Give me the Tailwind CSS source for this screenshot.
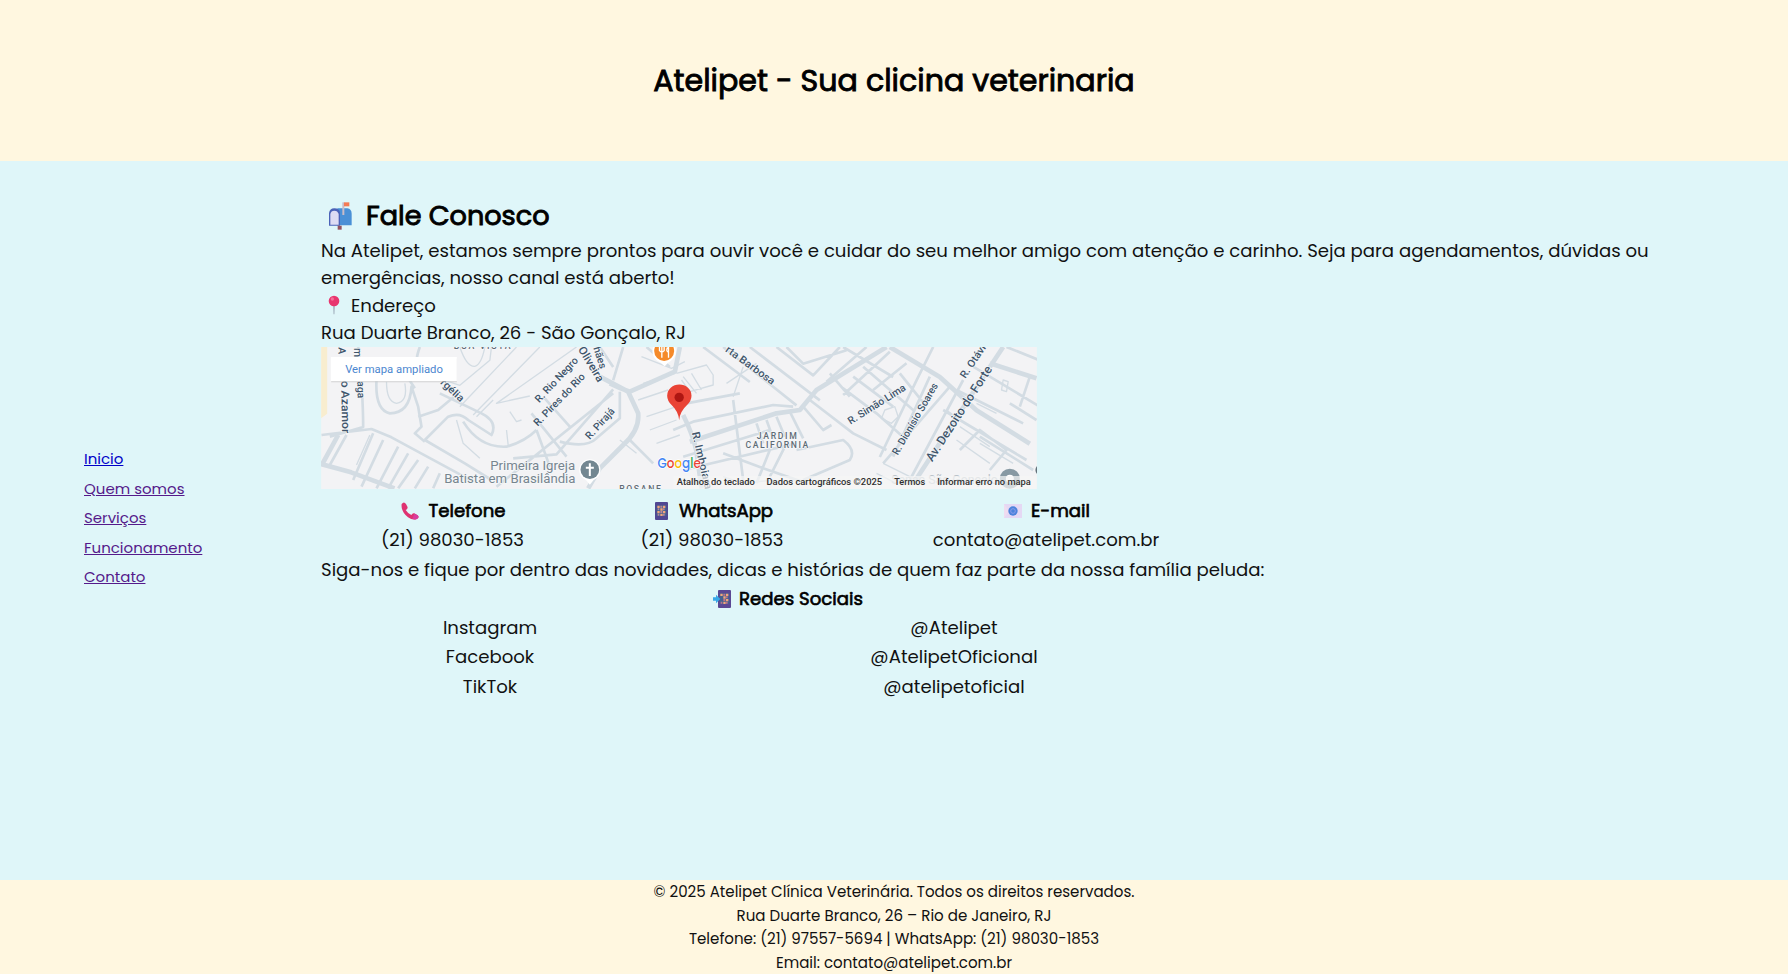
<!DOCTYPE html>
<html lang="pt-BR">
<head>
<meta charset="utf-8">
<title>Atelipet - Fale Conosco</title>
<script src="https://cdn.jsdelivr.net/npm/@tailwindcss/browser@4"></script>
</head>
<body class="w-[1788px] h-[974px] overflow-hidden flex flex-col bg-[#dff6f9] text-[#111] font-[Poppins,Inter,sans-serif] whitespace-nowrap">
<header class="h-[161px] shrink-0 bg-[#fff7e0] flex items-center justify-center">
<h1 class="text-[30.1px] text-black [-webkit-text-stroke:0.9px_black]">Atelipet - Sua clicina veterinaria</h1>
</header>
<main class="h-[719.4px] shrink-0 flex">
<nav class="w-[321px] shrink-0 pl-[84px] pt-[283px] text-[15px] leading-[29.5px] text-[#551a8b] flex flex-col items-start">
<a class="underline text-[#0000c8]">Inicio</a>
<a class="underline">Quem somos</a>
<a class="underline">Serviços</a>
<a class="underline">Funcionamento</a>
<a class="underline">Contato</a>
</nav>
<section class="pt-[34px] text-[18.12px]">
<h2 class="h-[42px] leading-[42px] text-[27.1px] text-black flex items-center [-webkit-text-stroke:0.9px_black]">
<svg class="w-[26px] h-[30px] ml-[7px] mr-[12px]" viewBox="0 0 78 90"><path d="M28 22h30q13 2 13 16v35H28z" fill="#4a90d6"/><path d="M3 74V36q2-14 16-14 16 0 17 14v38z" fill="#4b62b8"/><path d="M7 71V39q2-10 12-10t13 10v32z" fill="#dedcf3"/><path d="M29 74h12v12H29z" fill="#93525f"/><path d="M43 4h6v38h-6z" fill="#c9bcc8"/><path d="M48 4h16v12H48z" fill="#f47b55"/></svg>Fale Conosco</h2>
<div class="leading-[27.3px]">
<p>Na Atelipet, estamos sempre prontos para ouvir você e cuidar do seu melhor amigo com atenção e carinho. Seja para agendamentos, dúvidas ou</p>
<p>emergências, nosso canal está aberto!</p>
<p class="flex items-center h-[27.3px]"><svg class="w-[12px] h-[20px] ml-[7px] mr-[11px]" viewBox="0 0 36 60"><path d="M16 28h4l-1 30h-2z" fill="#8b97a8"/><circle cx="18" cy="18" r="16" fill="#e8366f"/><circle cx="13" cy="12" r="5" fill="#f56d98"/></svg>Endereço</p>
<p>Rua Duarte Branco, 26 - São Gonçalo, RJ</p>
</div>
<svg class="block w-[716px] h-[142px] mt-[0.8px]" viewBox="34 21 2147 426" font-family="Roboto, sans-serif">
<rect x="34" y="21" width="2147" height="426" fill="#f3f3f5"/>
<path d="M34 21h18v200l-18 14z" fill="#f8edcf"/>
<g fill="none" stroke="#d3dce3" stroke-linejoin="round">
<g stroke-width="4">
<path d="M450 21q20 60 45 58 20-5 30-58M545 21l-5 40-90 75-60-20M620 21L450 200M690 21L490 225M800 21L560 190l100-22M230 125q0 60 30 65 35-5 25-60M550 180l-50 50M590 270l5 45M600 215l20 30 15-5M440 240l20 70 50 45M180 285l-40 90M930 300l50 40M1010 230l90-30M1020 270l80-30M1040 310l70-25M995 50l90 35 40-20M1000 130l95-30M985 180l90-30M1100 100l90-25 20 30v30l-70 20-25-35M1120 110l40 50M1145 100l30 50M1250 130l90-60M1270 170l30-90M1725 210l30-10 10 30-20 20-30-15zM1910 210l40 30M1940 300l100 70M1950 260l90 60M2000 190l60 30M2080 120l15 5-5 30-15-5zM2010 310l100 60M1720 370l80 40M1240 410l60 20 90-10M1700 400l60 30"/>
</g>
<g stroke-width="8">
<path d="M145 21q15 140 15 240L60 290M35 285l150-18 60 25 240 130M200 120q-5 90 40 100 60 0 65-80l20 60 10 60-20 20 30 25M330 21q-25 65 15 90M265 70l50 75M345 300l70-70q35-15 60 10l70 45q20-40-30-65L390 160M325 230l60-20 60-50M345 300l120 70 80 50M460 245q50 80 130 75 55-15 90-50M665 220l105 130M700 170l80 90M610 355l130-12 170-195M680 270l40 110M750 305q80 20 110-10l70-60V155M560 440l350-280M190 280l-60 140M220 300l-65 140M265 320l-65 125M295 340l-60 105M325 360l-60 85M355 380l-40 65M390 400l-20 45M60 375l50-90M960 300l70 70M1010 21l70 60M940 21l-30 100M870 21l40 60"/>
<path d="M1180 21l140 105M1240 21l220 175M1320 21l210 160M1400 21l110 85 80-85M1130 190l160-30M1090 270l60-25 240-50 60 5M1270 180l30 240M1120 350l260-80M1120 390l340-80M1340 250l20 60M1370 240l20 55M1400 230l25 60M1440 215l40 80M1480 200l60 70 25-15M1500 180l130 100 100 50M1600 145l100 75 90 80M1630 110l120 90M1660 80l150 130M1550 125l120-104M1600 165l140-130M1690 150l100-80M1600 21l150 90M1560 100l60 70M1770 100l80 100M1460 330l140-30q40 30 20 60l-140 60M1380 330l-40 100M1430 310l-50 100M1240 340l120 45 130 45M1870 21l-50 100-110 230M1920 140l-200 230M1860 110l-110 240M1960 120l-160 300M1990 80l200 120M2090 21l100 40M2160 110l-30 90M1940 150l200 100M1900 210l250 150M1950 330l60-60 80 60-50 60M2010 290l160 100M2100 190l80 50M1430 21l50 50 130-40"/>
</g>
<g stroke-width="14">
<path d="M34 372l90 25 130 48M85 285l-48 88M870 110l85 45 30 65q5 50-45 95l-70 70-35 60M900 130q30 15 60 25l135-60 15-74M1120 225q30 60 40 110l15 110M1140 305l260-85 70-10 50-60 210-129M1740 21l150 90 110 100 160 100M2080 21l-60 90-210 320M2040 70l140 45"/>
</g>
</g>
<g font-weight="500" font-size="31" fill="#3f556b" stroke="#f6f8fa" stroke-width="4" paint-order="stroke">
<text transform="translate(86 22) rotate(91)">A</text>
<text transform="translate(94 122) rotate(89)" textLength="158" lengthAdjust="spacingAndGlyphs" font-size="34">o Azamor</text>
<text transform="translate(133 24) rotate(90)">m</text>
<text transform="translate(142 124) rotate(88)">aga</text>
<text transform="translate(390 130) rotate(43)" textLength="84" lengthAdjust="spacingAndGlyphs">rgélia</text>
<text transform="translate(688 190) rotate(-47)" textLength="174" lengthAdjust="spacingAndGlyphs">R. Rio Negro</text>
<text transform="translate(684 260) rotate(-46)" textLength="206" lengthAdjust="spacingAndGlyphs">R. Pires do Rio</text>
<text transform="translate(840 300) rotate(-48)" textLength="114" lengthAdjust="spacingAndGlyphs">R. Pirajá</text>
<text transform="translate(804 28) rotate(59)" textLength="117" lengthAdjust="spacingAndGlyphs" font-size="34">Oliveira</text>
<text transform="translate(850 24) rotate(72)" textLength="67" lengthAdjust="spacingAndGlyphs">hães</text>
<text transform="translate(1245 33) rotate(36)" textLength="174" lengthAdjust="spacingAndGlyphs">rta Barbosa</text>
<text transform="translate(1622 254) rotate(-32)" textLength="198" lengthAdjust="spacingAndGlyphs">R. Simão Lima</text>
<text transform="translate(1764 347) rotate(-60)" textLength="243" lengthAdjust="spacingAndGlyphs">R. Dionísio Soares</text>
<text transform="translate(1867 367) rotate(-57)" textLength="333" lengthAdjust="spacingAndGlyphs" font-size="37">Av. Dezoito do Forte</text>
<text transform="translate(1966 117) rotate(-56)" textLength="132" lengthAdjust="spacingAndGlyphs">R. Otávio</text>
<text transform="translate(1146 278) rotate(77)" textLength="176" lengthAdjust="spacingAndGlyphs" font-size="33">R. Imboiara</text>
</g>
<g font-size="26" font-weight="500" fill="#5f6b75" stroke="#f6f8fa" stroke-width="4" paint-order="stroke">
<text x="432" y="27" textLength="170">BOA VISTA</text>
<text x="928" y="455" textLength="125">ROSANE</text>
<text x="1341" y="297" textLength="120">JARDIM</text><text x="1307" y="325" textLength="188">CALIFORNIA</text>
</g>
<g font-size="39" fill="#77858f" stroke="#f6f8fa" stroke-width="4" paint-order="stroke"><text x="541" y="389" textLength="255" lengthAdjust="spacingAndGlyphs">Primeira Igreja</text><text x="403" y="428" textLength="394" lengthAdjust="spacingAndGlyphs">Batista em Brasilândia</text></g>
<path d="M822 412h36l-18 22z" fill="#fff"/><circle cx="840" cy="390" r="32" fill="#fff"/><circle cx="840" cy="389" r="28" fill="#738791"/><path d="M840 370v38M828 383h24" stroke="#fff" stroke-width="6"/>
<path d="M1042 58l22 21 22-21z" fill="#fff"/><circle cx="1063" cy="34" r="35" fill="#fff"/><circle cx="1063" cy="33" r="30" fill="#f58a2a"/><path d="M1056 21v32M1049 21v11q7 8 14 0V21M1076 21v32M1073 22q-5 12 2 14" stroke="#fff" stroke-width="4" fill="none"/>
<path d="M1108 240q-3-26-22-44-14-14-14-29a36 33 0 0 1 73 0q0 15-14 29-20 18-23 44z" fill="#e94335"/><circle cx="1108" cy="172" r="14" fill="#ae1612"/>
<circle cx="2100" cy="416" r="30" fill="#8799a3"/><circle cx="2100" cy="416" r="12" fill="#fff"/><path d="M2181 378q-8 12 0 24z" fill="#42545f"/>
<text x="1744" y="432" font-size="36" fill="#b9c2c9" textLength="320" lengthAdjust="spacingAndGlyphs">Senac São Gonçalo</text>
<rect x="1090" y="408" width="1091" height="39" fill="#f5f5f5" fill-opacity=".7"/>
<text x="1043" y="384" font-family="Poppins, sans-serif" font-size="42" font-weight="500" textLength="130" lengthAdjust="spacingAndGlyphs" stroke="#fff" stroke-width="4" paint-order="stroke"><tspan fill="#4285f4">G</tspan><tspan fill="#ea4335">o</tspan><tspan fill="#fbbc05">o</tspan><tspan fill="#4285f4">g</tspan><tspan fill="#34a853">l</tspan><tspan fill="#ea4335">e</tspan></text>
<g font-size="27" font-weight="500" fill="#303030"><text x="1101" y="434" textLength="234" lengthAdjust="spacingAndGlyphs">Atalhos do teclado</text><text x="1370" y="434" textLength="347" lengthAdjust="spacingAndGlyphs">Dados cartográficos ©2025</text><text x="1753" y="434" textLength="93" lengthAdjust="spacingAndGlyphs">Termos</text><text x="1882" y="434" textLength="281" lengthAdjust="spacingAndGlyphs">Informar erro no mapa</text></g>
<rect x="64" y="56" width="377" height="71" fill="#ccc" fill-opacity=".6"/><rect x="63" y="51" width="378" height="72" fill="#fff"/>
<text x="106" y="98" font-size="35" fill="#4b86cf" textLength="293" lengthAdjust="spacingAndGlyphs">Ver mapa ampliado</text>
</svg>
<div class="mt-[7px] leading-[29.3px] text-center">
<div class="grid grid-cols-[263px_256px_412px]">
<div class="flex items-center justify-center h-[29.3px] text-black [-webkit-text-stroke:0.65px_black]"><svg class="w-[18px] h-[18px] ml-[2px] mr-[9px]" viewBox="0 0 54 54"><path d="M2 6q7-9 13 0l5 10q0 6-6 8 7 11 17 15 4-7 9-5l10 6q6 6-1 10-12 7-28-4Q-1 28 2 6z" fill="#df3272"/><path d="M40 35l10 5q6 6-1 10-6 4-15 1z" fill="#d93c9d"/></svg>Telefone</div>
<div class="flex items-center justify-center h-[29.3px] text-black [-webkit-text-stroke:0.65px_black]"><svg class="w-[13px] h-[18px] ml-[4px] mr-[11px]" viewBox="0 0 39 54"><rect width="39" height="54" rx="3" fill="#504793"/><path d="M5 10h29v32H5z" fill="#45618f"/><path d="M7 11h7v7H7zM24 11h7v7h-7zM16 19h7v7h-7zM7 27h7v7H7zM24 27h7v7h-7zM16 35h7v7h-7z" fill="#f2a47a"/><path d="M16 11h6v6h-6zM8 19h5v6H8zM24 19h5v6h-5zM16 27h6v6h-6zM8 35h5v6H8zM24 35h5v6h-5z" fill="#b98599"/></svg>WhatsApp</div>
<div class="flex items-center justify-center h-[29.3px] text-black [-webkit-text-stroke:0.65px_black]"><svg class="w-[18px] h-[14px] ml-[2px] mr-[9px]" viewBox="0 0 54 42"><rect width="54" height="42" fill="#e5d8f4"/><path d="M0 0l15 21L0 42z" fill="#efdcf0"/><circle cx="27" cy="21" r="14" fill="#4c83dc"/><circle cx="27" cy="21" r="7" fill="none" stroke="#8a9ce9" stroke-width="3"/></svg>E-mail</div>
<div>(21) 98030-1853</div><div>(21) 98030-1853</div><div>contato@atelipet.com.br</div>
</div>
<p class="text-left">Siga-nos e fique por dentro das novidades, dicas e histórias de quem faz parte da nossa família peluda:</p>
<div class="w-[934px] h-[29.3px] flex items-center justify-center text-black [-webkit-text-stroke:0.65px_black]"><svg class="w-[19px] h-[18px] mr-[7px]" viewBox="0 0 57 54"><rect x="15" width="39" height="54" rx="3" fill="#5a4794"/><path d="M20 10h29v32H20z" fill="#45618f"/><path d="M22 11h7v7h-7zM39 11h7v7h-7zM31 19h7v7h-7zM39 27h7v7h-7zM31 35h7v7h-7z" fill="#f2a47a"/><path d="M31 11h6v6h-6zM39 19h5v6h-5zM31 27h6v6h-6zM23 35h5v6h-5zM39 35h5v6h-5z" fill="#c0708a"/><path d="M0 22h9v-8l13 13L9 40v-8H0z" fill="#38a8e8"/></svg>Redes Sociais</div>
<div class="grid grid-cols-[338px_590px]">
<div>Instagram</div><div>@Atelipet</div>
<div>Facebook</div><div>@AtelipetOficional</div>
<div>TikTok</div><div>@atelipetoficial</div>
</div>
</div>
</section>
</main>
<footer class="grow bg-[#fff7e0] text-center text-[15.05px] leading-[23.5px]">
<p>© 2025 Atelipet Clínica Veterinária. Todos os direitos reservados.</p>
<p>Rua Duarte Branco, 26 – Rio de Janeiro, RJ</p>
<p>Telefone: (21) 97557-5694 | WhatsApp: (21) 98030-1853</p>
<p>Email: contato@atelipet.com.br</p>
</footer>
</body>
</html>
